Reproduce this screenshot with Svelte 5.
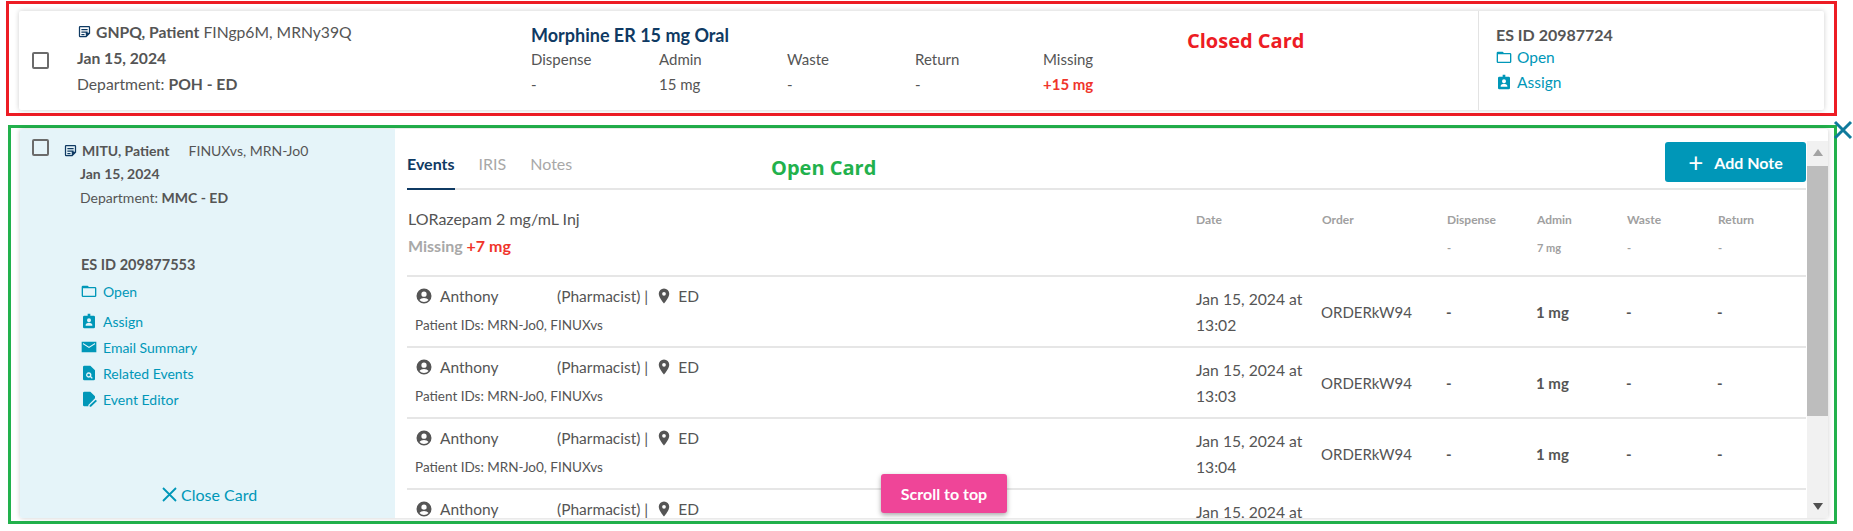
<script>
	const closedCols = [
		{ label: 'Dispense', value: '-' },
		{ label: 'Admin', value: '15 mg' },
		{ label: 'Waste', value: '-' },
		{ label: 'Return', value: '-' },
		{ label: 'Missing', value: '+15 mg', missing: true }
	];

	const heads = [
		{ label: 'Dispense', value: '-' },
		{ label: 'Admin', value: '7 mg' },
		{ label: 'Waste', value: '-' },
		{ label: 'Return', value: '-' }
	];

	const events = ['13:02', '13:03', '13:04', '13:05'];

	const actions = [
		{ label: 'Assign', icon: 'badge' },
		{ label: 'Email Summary', icon: 'mail' },
		{ label: 'Related Events', icon: 'search' },
		{ label: 'Event Editor', icon: 'edit' }
	];

	const paths = {
		note: 'M5 3h14a2 2 0 0 1 2 2v10l-6 6H5a2 2 0 0 1-2-2V5a2 2 0 0 1 2-2zm0 2v14h9v-5h5V5zm2 3h10v2H7zm0 4h10v2H7zm0 4h5v2H7z',
		folder: 'M3 4h7l2 2h9a2 2 0 0 1 2 2v11a2 2 0 0 1-2 2H3a2 2 0 0 1-2-2V6a2 2 0 0 1 2-2zm0 4v11h18V8z',
		badge: 'M10 1h4v3h5a2 2 0 0 1 2 2v15a2 2 0 0 1-2 2H5a2 2 0 0 1-2-2V6a2 2 0 0 1 2-2h5zm2 7a3 3 0 1 0 0 6 3 3 0 0 0 0-6zm-5 11h10v-1.5c0-2-3.300-3-5-3s-5 1-5 3z',
		mail: 'M1 4h22v16H1zM3 6l9 5.500L21 6v2l-9 5.500L3 8z',
		search: 'M5 1h9l7 7v13a2 2 0 0 1-2 2H5a2 2 0 0 1-2-2V3a2 2 0 0 1 2-2zm6.500 10a4 4 0 1 0 2.300 7.300l2.500 2.500 1.400-1.400-2.500-2.500A4 4 0 0 0 11.500 11zm0 2a2 2 0 1 1 0 4 2 2 0 0 1 0-4z',
		edit: 'M5 1h9l7 7v3L11 21v2H5a2 2 0 0 1-2-2V3a2 2 0 0 1 2-2zM22 13l2 2-9 8.500h-2v-2z',
		person: 'M12 2a10 10 0 1 0 0 20 10 10 0 0 0 0-20zm0 4a3.500 3.500 0 1 1 0 7 3.500 3.500 0 0 1 0-7zm0 14a8 8 0 0 1-6-2.800c.8-1.700 3.800-2.700 6-2.700s5.200 1 6 2.700A8 8 0 0 1 12 20z',
		pin: 'M12 2a7 7 0 0 0-7 7c0 5.200 7 13 7 13s7-7.800 7-13a7 7 0 0 0-7-7zm0 9.500a2.500 2.500 0 1 1 0-5 2.500 2.500 0 0 1 0 5z'
	};
</script>

{#snippet icon(name, size, cls)}
	<svg class={cls} width={size} height={size} viewBox="0 0 24 24" fill="currentColor" fill-rule="evenodd"><path d={paths[name]} /></svg>
{/snippet}

<div class="page">
	<!-- closed card -->
	<section class="frame red">
		<span class="tag tag-red">Closed Card</span>
		<div class="card closed">
			<span class="check"></span>
			<div class="who">
				<div class="line">{@render icon('note', 15, 'navy')}<b>GNPQ, Patient</b> FINgp6M, MRNy39Q</div>
				<div class="line"><b>Jan 15, 2024</b></div>
				<div class="line">Department: <b>POH - ED</b></div>
			</div>
			<div class="drug">
				<div class="drug-name">Morphine ER 15 mg Oral</div>
				<div class="cols">
					{#each closedCols as c}
						<div class="col">
							<div>{c.label}</div>
							<div class:missing={c.missing}>{c.value}</div>
						</div>
					{/each}
				</div>
			</div>
			<div class="side">
				<b>ES ID 20987724</b>
				<a href="#open">{@render icon('folder', 16)}Open</a>
				<a href="#assign">{@render icon('badge', 16)}Assign</a>
			</div>
		</div>
	</section>

	<!-- open card -->
	<section class="frame green">
		<span class="tag tag-green">Open Card</span>
		<svg class="corner-x" width="20" height="20" viewBox="0 0 20 20"><path d="M2 2l16 16M18 2L2 18" stroke="#0f7a9c" stroke-width="3" fill="none" /></svg>
		<div class="card open">
			<aside>
				<div class="aside-top">
					<span class="check"></span>
					<div class="line first">{@render icon('note', 15, 'navy')}<b>MITU, Patient</b><span class="fin">FINUXvs, MRN-Jo0</span></div>
				</div>
				<div class="meta">
					<div><b>Jan 15, 2024</b></div>
					<div>Department: <b>MMC - ED</b></div>
				</div>
				<div class="es"><b>ES ID 209877553</b></div>
				<a class="act open-link" href="#open">{@render icon('folder', 16)}Open</a>
				<div class="acts">
					{#each actions as a}
						<a class="act" href="#{a.icon}">{@render icon(a.icon, 16)}{a.label}</a>
					{/each}
				</div>
				<a class="close" href="#close">
					<svg width="15" height="15" viewBox="0 0 15 15"><path d="M1 1l13 13M14 1L1 14" stroke="currentColor" stroke-width="1.800" fill="none" /></svg>
					Close Card
				</a>
			</aside>
			<div class="main">
				<div class="content">
					<div class="tabbar">
						<div class="tabs">
							<span class="tab active">Events</span>
							<span class="tab">IRIS</span>
							<span class="tab">Notes</span>
						</div>
						<button class="add" type="button"><span class="plus">+</span>Add Note</button>
					</div>
					<div class="summary">
						<div class="summary-left">
							<div class="lor">LORazepam 2 mg/mL Inj</div>
							<div class="miss-line">Missing <span>+7 mg</span></div>
						</div>
						<div class="grid-cols head">
							<div>Date</div>
							<div>Order</div>
							{#each heads as h}
								<div>{h.label}<small>{h.value}</small></div>
							{/each}
						</div>
					</div>
					{#each events as time}
						<div class="row">
							<div class="row-left">
								<div class="person">
									{@render icon('person', 18)}
									<span class="name">Anthony</span>
									<span class="role">(Pharmacist) |</span>
									{@render icon('pin', 18)}
									<span>ED</span>
								</div>
								<div class="ids">Patient IDs: MRN-Jo0, FINUXvs</div>
							</div>
							<div class="grid-cols vals">
								<div class="date">Jan 15, 2024 at<br />{time}</div>
								<div>ORDERkW94</div>
								<div class="dash">-</div>
								<div class="dash">1 mg</div>
								<div class="dash">-</div>
								<div class="dash">-</div>
							</div>
						</div>
					{/each}
				</div>
				<div class="scrollbar">
					<span class="arrow up"></span>
					<span class="thumb"></span>
					<span class="track"></span>
					<span class="arrow down"></span>
				</div>
			</div>
		</div>
		<button class="to-top" type="button">Scroll to top</button>
	</section>
</div>

<style>
	:global(body) {
		margin: 0;
		background: #fff;
		font-family: 'Lato', 'Open Sans', sans-serif;
		color: #555;
	}

	.page {
		width: 1853px;
		height: 531px;
		padding: 1px 0 0 6px;
		box-sizing: border-box;
		overflow: hidden;
		display: flex;
		flex-direction: column;
		gap: 9px;
	}

	.frame {
		position: relative;
		width: 1831px;
		box-sizing: border-box;
		border: 3px solid;
		padding: 7px 10px 3px 10px;
	}

	.red {
		height: 115px;
		border-color: #ed1c24;
	}

	.green {
		height: 399px;
		border-color: #22b14c;
		margin-left: 2px;
		width: 1829px;
		padding: 1px 6px 3px 9px;
	}

	.tag {
		position: absolute;
		font: 700 20px 'Open Sans', sans-serif;
		z-index: 2;
	}

	.tag-red {
		left: 1178px;
		top: 23px;
		color: #ed1c24;
	}

	.tag-green {
		left: 760px;
		top: 26px;
		color: #22b14c;
	}

	.corner-x {
		position: absolute;
		right: -19px;
		top: -8px;
	}

	.card {
		display: flex;
		background: #fff;
		height: 100%;
		box-sizing: border-box;
		box-shadow: 0 0 5px rgba(0, 0, 0, 0.2);
		border-radius: 2px;
	}

	.check {
		width: 13px;
		height: 13px;
		border: 2px solid #6b6b6b;
		border-radius: 2px;
		flex: none;
	}

	b {
		font-weight: 700;
	}

	.closed {
		align-items: center;
		font-size: 15.700px;
	}

	.closed .check {
		margin: 0 0 0 13px;
	}

	.who {
		width: 453px;
		margin-left: 28px;
		padding-bottom: 6px;
	}

	.line {
		display: flex;
		align-items: center;
		height: 26px;
		white-space: pre;
	}

	.navy {
		color: #0f3a63;
		flex: none;
		margin-right: 4px;
	}

	.drug {
		width: 948px;
		align-self: flex-start;
		padding: 13px 0 0 1px;
		box-sizing: border-box;
	}

	.drug-name {
		font-size: 18px;
		font-weight: 700;
		color: #0f3a63;
		margin-bottom: 4px;
	}

	.cols {
		display: flex;
	}

	.col {
		width: 128px;
		display: flex;
		flex-direction: column;
		gap: 7px;
		font-size: 15px;
	}

	.missing {
		color: #f0352b;
		font-weight: 700;
	}

	.side {
		align-self: stretch;
		border-left: 1px solid #e3e3e3;
		padding: 14px 0 0 17px;
		display: flex;
		flex-direction: column;
		flex: 1;
		gap: 4px;
		font-size: 16px;
	}

	.side b {
		margin-bottom: -2px;
	}

	a {
		color: #0097b8;
		text-decoration: none;
		display: flex;
		align-items: center;
		gap: 5px;
		font-size: 15.500px;
	}

	.side a {
		height: 21px;
	}

	.open {
		overflow: hidden;
	}

	aside {
		width: 375px;
		flex: none;
		background: #e5f4f9;
		box-sizing: border-box;
		padding: 10px 0 0 12px;
		font-size: 14px;
		display: flex;
		flex-direction: column;
		position: relative;
	}

	.aside-top {
		display: flex;
		gap: 14px;
	}

	.line.first {
		height: 22px;
	}

	.fin {
		margin-left: 19px;
	}

	.meta {
		margin: 4px 0 0 48px;
		display: flex;
		flex-direction: column;
		gap: 6px;
		line-height: 18px;
	}

	.es {
		margin: 49px 0 0 49px;
		font-size: 14.500px;
	}

	.act {
		margin-left: 49px;
		font-size: 14px;
		gap: 6px;
		height: 20px;
	}

	.open-link {
		margin-top: 8px;
	}

	.acts {
		margin-top: 10px;
		display: flex;
		flex-direction: column;
		gap: 6px;
	}

	.close {
		position: absolute;
		left: 142px;
		bottom: 14px;
		font-size: 16px;
		gap: 4px;
	}

	.main {
		flex: 1;
		display: flex;
		min-width: 0;
		padding-top: 12px;
	}

	.content {
		flex: 1;
		padding: 0 0 0 12px;
		min-width: 0;
		overflow: hidden;
	}

	.tabbar {
		display: flex;
		justify-content: space-between;
		height: 47px;
		border-bottom: 2px solid #e6e6e6;
	}

	.tabs {
		display: flex;
		gap: 24px;
		font-size: 16px;
		color: #a8a8a8;
	}

	.tab {
		padding-top: 13px;
		height: 34px;
	}

	.tab.active {
		color: #0f3a63;
		font-weight: 700;
		border-bottom: 2px solid #0f3a63;
	}

	.add {
		width: 141px;
		height: 40px;
		margin-top: 1px;
		background: #0097b8;
		color: #fff;
		border: none;
		border-radius: 3px;
		font: 700 16px 'Lato', sans-serif;
		display: flex;
		align-items: center;
		justify-content: center;
		gap: 11px;
	}

	.plus {
		font-size: 26px;
		font-weight: 400;
		line-height: 1;
	}

	.summary,
	.row {
		display: flex;
		border-bottom: 2px solid #e6e6e6;
	}

	.summary {
		height: 87px;
		box-sizing: border-box;
	}

	.summary-left {
		width: 788px;
		padding: 19px 0 0 1px;
		box-sizing: border-box;
	}

	.row-left {
		width: 788px;
		padding: 6px 0 0 8px;
		box-sizing: border-box;
	}

	.lor {
		font-size: 16px;
	}

	.miss-line {
		margin-top: 8px;
		font-size: 16px;
		font-weight: 700;
		color: #a8a8a8;
	}

	.miss-line span {
		color: #f0352b;
	}

	.grid-cols {
		display: grid;
		grid-template-columns: 126px 125px 90px 90px 91px 1fr;
		flex: 1;
	}

	.head {
		font-size: 12px;
		font-weight: 700;
		color: #a0a0a0;
		padding-top: 22px;
		margin-left: 1px;
	}

	.head small {
		display: block;
		font-size: 11px;
		margin-top: 14px;
	}

	.row {
		height: 71px;
		box-sizing: border-box;
	}

	.person {
		display: flex;
		align-items: center;
		gap: 6px;
		font-size: 15.500px;
		height: 26px;
	}

	.name {
		width: 111px;
		margin-left: 1px;
	}

	.role {
		margin-right: 1px;
	}

	.person svg:nth-of-type(2) {
		margin-right: -1px;
	}

	.ids {
		font-size: 13.500px;
		margin-top: 8px;
	}

	.vals {
		align-items: center;
		font-size: 15px;
	}

	.date {
		line-height: 26px;
		font-size: 15.700px;
		margin-left: 1px;
	}

	.dash {
		font-weight: 700;
	}

	.scrollbar {
		width: 21px;
		margin-left: 1px;
		background: #f1f1f1;
		flex: none;
		display: flex;
		flex-direction: column;
		align-items: center;
	}

	.thumb {
		width: 100%;
		height: 250px;
		background: #bdbdbd;
	}

	.track {
		flex: 1;
	}

	.arrow {
		width: 0;
		height: 0;
		border-left: 5px solid transparent;
		border-right: 5px solid transparent;
		margin: 8px 0;
	}

	.up {
		border-bottom: 7px solid #a3a3a3;
		margin-bottom: 10px;
	}

	.down {
		border-top: 7px solid #505050;
	}

	.to-top {
		position: absolute;
		left: 870px;
		bottom: 8px;
		width: 126px;
		height: 39px;
		background: #ef4598;
		color: #fff;
		border: none;
		border-radius: 3px;
		font: 700 16px 'Lato', sans-serif;
		box-shadow: 0 2px 5px rgba(0, 0, 0, 0.35);
	}
</style>
